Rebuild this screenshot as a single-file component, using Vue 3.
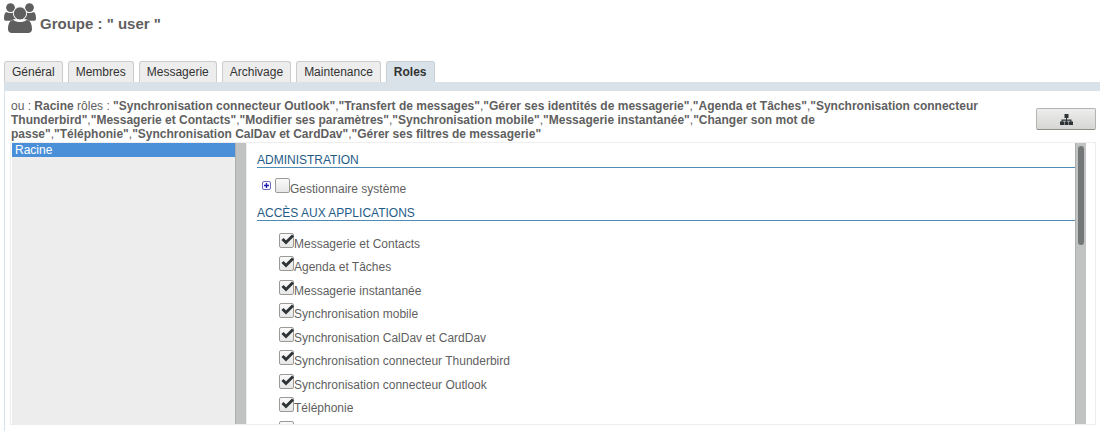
<script setup>
import { ref } from 'vue'

const tabs = ['Général', 'Membres', 'Messagerie', 'Archivage', 'Maintenance', 'Roles']
const activeTab = ref('Roles')
const selectedUnit = ref('Racine')
const expanded = ref(false)
const adminRole = ref(false)

const summary = [
  'Synchronisation connecteur Outlook',
  'Transfert de messages',
  'Gérer ses identités de messagerie',
  'Agenda et Tâches',
  'Synchronisation connecteur Thunderbird',
  'Messagerie et Contacts',
  'Modifier ses paramètres',
  'Synchronisation mobile',
  'Messagerie instantanée',
  'Changer son mot de passe',
  'Téléphonie',
  'Synchronisation CalDav et CardDav',
  'Gérer ses filtres de messagerie',
]

const apps = ref([
  { name: 'Messagerie et Contacts', on: true },
  { name: 'Agenda et Tâches', on: true },
  { name: 'Messagerie instantanée', on: true },
  { name: 'Synchronisation mobile', on: true },
  { name: 'Synchronisation CalDav et CardDav', on: true },
  { name: 'Synchronisation connecteur Thunderbird', on: true },
  { name: 'Synchronisation connecteur Outlook', on: true },
  { name: 'Téléphonie', on: true },
  { name: '', on: false },
])
</script>

<template>
  <div class="page">
    <header class="title">
      <svg class="group-icon" viewBox="0 0 32 30" aria-hidden="true">
        <circle cx="6.5" cy="4.6" r="4.4" />
        <circle cx="25.5" cy="4.6" r="4.4" />
        <path d="M2.5 9 C4.5 10.4 7 10.4 9.3 9.4 C9.5 12 10.6 14.4 12 16 C10 16.2 8.4 16.8 7.2 17.8 H2.4 C.8 17.8 0 17 0 15.4 C0 12.4 .6 9.6 2.5 9Z" />
        <path d="M29.5 9 C27.5 10.4 25 10.4 22.7 9.4 C22.5 12 21.4 14.4 20 16 C22 16.2 23.6 16.8 24.8 17.8 H29.6 C31.2 17.8 32 17 32 15.4 C32 12.4 31.4 9.6 29.5 9Z" />
        <circle class="front-head" cx="16" cy="10.4" r="6.6" />
        <path d="M9.3 17 C13 19.8 19 19.8 22.7 17 C26.4 17.2 28 21.4 28 26 C28 28.6 26.6 30 24 30 H8 C5.4 30 4 28.6 4 26 C4 21.4 5.6 17.2 9.3 17Z" />
      </svg>
      <h1>Groupe : " user "</h1>
    </header>

    <nav class="tabs">
      <button
        v-for="tab in tabs"
        :key="tab"
        type="button"
        class="tab"
        :class="{ active: tab === activeTab }"
        @click="activeTab = tab"
      >{{ tab }}</button>
    </nav>

    <main class="panel">
      <div class="summary-row">
        <p class="summary">ou : <b>Racine</b> rôles : <template v-for="(role, i) in summary" :key="role"><template v-if="i">,</template><b>"{{ role }}"</b></template></p>
        <button type="button" class="tree-button" aria-label="Arborescence">
          <svg viewBox="0 0 13 11" aria-hidden="true">
            <path d="M4.5 0h4v4H7v1.500h4.500V7.500H13V11H9V7.500h1.300V6.700H7v.8h1.500V11h-4V7.500H6v-.8H2.700v.8H4V11H0V7.500h1.500v-2H6V4H4.500z" />
          </svg>
        </button>
      </div>

      <div class="frame">
        <aside class="units">
          <select v-model="selectedUnit" class="unit-list" size="4" aria-label="Unité">
            <option value="Racine">Racine</option>
          </select>
          <div class="track"></div>
        </aside>

        <section class="roles">
          <div class="roles-body">
            <h2>ADMINISTRATION</h2>
            <div class="admin-row">
              <button type="button" class="expander" aria-label="Développer" @click="expanded = !expanded">
                <svg viewBox="0 0 9 9" aria-hidden="true">
                  <rect x=".5" y=".5" width="8" height="8" rx="1.500" fill="#fff" stroke="#6a6abf" />
                  <path d="M2 4.500h5M4.500 2v5" stroke="#1c1cb0" stroke-width="1.400" />
                </svg>
              </button>
              <label class="check">
                <span class="box">
                  <input v-model="adminRole" type="checkbox" />
                  <svg v-if="adminRole" viewBox="0 0 15 15" aria-hidden="true"><path d="M3.500 6 7 9.500 14 2.500" /></svg>
                </span>
                <span class="label">Gestionnaire système</span>
              </label>
            </div>
            <h2>ACCÈS AUX APPLICATIONS</h2>
            <div class="apps">
              <label v-for="(app, i) in apps" :key="i" class="check">
                <span class="box">
                  <input v-model="app.on" type="checkbox" />
                  <svg v-if="app.on" viewBox="0 0 15 15" aria-hidden="true"><path d="M3.500 6 7 9.500 14 2.500" /></svg>
                </span>
                <span class="label">{{ app.name }}</span>
              </label>
            </div>
          </div>
          <div class="track scroller"><div class="thumb"></div></div>
        </section>
      </div>
    </main>
  </div>
</template>

<style>
body {
  background: #fff;
}
</style>

<style scoped>
.page,
.page * {
  box-sizing: border-box;
}

.page {
  display: flex;
  flex-direction: column;
  height: 100vh;
  overflow: hidden;
  padding-left: 4px;
  color: #5f5f5f;
  font: 12px/14px "Liberation Sans", Arial, sans-serif;
}

button,
select {
  font: inherit;
}

.title {
  display: flex;
  gap: 4px;
  padding-top: 3px;
  height: 61px;
}

.group-icon {
  width: 32px;
  height: 30px;
  fill: #5f5f5f;
}

.front-head {
  stroke: #fff;
  stroke-width: 1;
}

h1 {
  margin: 12px 0 0;
  font-size: 15px;
  line-height: 18px;
}

.tabs {
  display: flex;
  gap: 5px;
}

.tab {
  height: 21px;
  padding: 0 7px;
  border: 1px solid #ccc;
  border-bottom: 0;
  border-radius: 3px 3px 0 0;
  background: #ededed;
  color: #333;
}

.tab.active {
  border-color: #c8d0d5;
  background: #d9e2e8;
  font-weight: bold;
}

.panel {
  flex: 1;
  display: flex;
  flex-direction: column;
  min-height: 0;
  padding: 7px 4px 6px 6px;
  border-top: 9px solid #d9e2e8;
  border-left: 1px solid #d9e2e8;
}

.summary-row {
  display: flex;
  justify-content: space-between;
  align-items: center;
  height: 44px;
}

.summary {
  flex: 0 1 990px;
  margin: 0;
}

.tree-button {
  display: flex;
  align-items: center;
  justify-content: center;
  width: 60px;
  height: 22px;
  margin-bottom: 2px;
  padding: 0;
  border: 1px solid #b4b4b0;
  border-bottom-color: #8e8e88;
  border-radius: 2px;
  background: linear-gradient(#ededed, #d6d6d4);
}

.tree-button svg {
  width: 13px;
  height: 11px;
  fill: #2e3436;
}

.frame {
  flex: 1;
  display: flex;
  min-height: 0;
  margin-left: -1px;
  border: 1px solid #eee;
}

.units {
  display: flex;
  flex: 0 0 236px;
  border-right: 1px solid #eee;
  background: #ededed;
}

.unit-list {
  flex: 1;
  min-width: 0;
  height: 100%;
  padding: 0;
  border: 0;
  border-left: 1px solid #fff;
  border-radius: 0;
  outline: 0;
  background: #ededed;
  overflow: hidden;
}

.unit-list option {
  min-height: 14px;
  padding: 0 3px;
  line-height: 14px;
}

.unit-list option:checked {
  background: #4a90d9 linear-gradient(#4a90d9, #4a90d9);
  color: #fff;
}

.track {
  flex: 0 0 11px;
  border-left: 1px solid #adafae;
  background: #c1c3c2;
}

.roles {
  flex: 1;
  display: flex;
  min-width: 0;
  padding-right: 9px;
}

.roles-body {
  flex: 1;
  min-width: 0;
  overflow: hidden;
  padding: 10px 0 0 10px;
}

.scroller {
  padding: 3px 2px;
}

.thumb {
  width: 6px;
  height: 99px;
  border-radius: 3px;
  background: #747777;
}

h2 {
  margin: 0;
  border-bottom: 1px solid #4f8ab5;
  color: #1f5c87;
  font-size: 12px;
  font-weight: normal;
  line-height: 14px;
}

.admin-row {
  display: flex;
  align-items: flex-start;
  gap: 4px;
  height: 38px;
  padding: 10px 0 0 5px;
}

.expander {
  display: flex;
  width: 9px;
  height: 9px;
  margin-top: 3px;
  padding: 0;
  border: 0;
  background: none;
}

.expander svg {
  width: 9px;
  height: 9px;
}

.apps {
  display: grid;
  grid-auto-rows: 1fr;
  height: 211px;
  margin-top: 12px;
  padding-left: 22px;
}

.check {
  display: flex;
  align-items: flex-start;
}

.box {
  display: grid;
  width: 15px;
  height: 15px;
}

.box input,
.box svg {
  grid-area: 1 / 1;
  width: 15px;
  height: 15px;
  margin: 0;
}

.box input {
  appearance: none;
  border: 1px solid #9b9b96;
  border-radius: 2px;
  background: linear-gradient(#fafafa, #e6e6e6);
}

.box svg {
  fill: none;
  stroke: #2e3436;
  stroke-width: 3;
  pointer-events: none;
}

.label {
  padding-top: 4px;
  line-height: 15px;
}
</style>
